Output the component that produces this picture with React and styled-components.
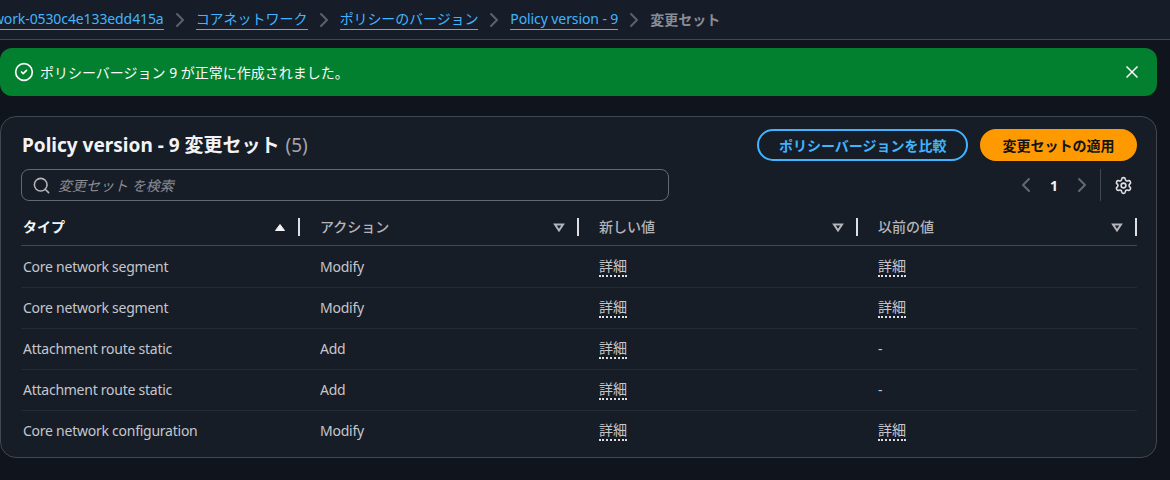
import React from 'react'
import styled, { createGlobalStyle } from 'styled-components'
import { Search, X, ChevronLeft, ChevronRight, Settings, CircleCheck } from 'lucide-react'

const GlobalStyle = createGlobalStyle`
  html, body {
    margin: 0;
    padding: 0;
    background: #0f141a;
  }
  body {
    font-family: "Noto Sans", "Noto Sans CJK JP", sans-serif;
    font-size: 14px;
    color: #c6c6cd;
  }
`

const Page = styled.div`
  width: 1170px;
  height: 480px;
  overflow: hidden;
  background: #10151d;
`

const TopBar = styled.nav`
  height: 39px;
  display: flex;
  align-items: center;
  background: #161d28;
  border-bottom: 1px solid #424650;
  overflow: hidden;
`

const Crumbs = styled.div`
  display: flex;
  align-items: center;
  margin-left: -61px;
  white-space: nowrap;
`

const CrumbLink = styled.a`
  color: #42b4ff;
  font-size: 14px;
  line-height: 20px;
  border-bottom: 1px solid #42b4ff;
  letter-spacing: ${p => (p.$tight ? '-0.1px' : '0')};
`

const CrumbSep = styled(ChevronRight)`
  width: 24px;
  height: 24px;
  color: #5f6169;
  margin: 0 4px;
  flex: none;
`

const CrumbCurrent = styled.span`
  color: #8c8c94;
  font-size: 14px;
  font-weight: 700;
  margin-bottom: 2px;
`

const Flash = styled.div`
  margin: 8px 13px 0 0;
  height: 48px;
  box-sizing: border-box;
  background: #037f30;
  border-radius: 12px;
  display: flex;
  align-items: center;
  padding: 0 15px 0 14px;
  color: #f9f9fa;
  font-size: 14px;
`

const FlashText = styled.span`
  flex: 1;
  margin-left: 6px;
`

const Card = styled.section`
  margin: 20px 13px 0 0;
  height: 342px;
  box-sizing: border-box;
  border: 1px solid #424650;
  border-radius: 16px;
  background: #161d26;
  padding: 12px 19px 0 20px;
`

const CardHead = styled.div`
  display: flex;
  align-items: center;
  justify-content: space-between;
  height: 32px;
`

const Title = styled.h2`
  margin: 0 0 0 1px;
  font-size: 19px;
  line-height: 32px;
  font-weight: 700;
  color: #f3f3f7;
`

const Count = styled.span`
  color: #a4a4ad;
  font-weight: 400;
  margin-left: 1px;
`

const Actions = styled.div`
  display: flex;
  gap: 12px;
`

const Button = styled.button`
  height: 32px;
  box-sizing: border-box;
  border-radius: 16px;
  font-family: inherit;
  font-size: 14px;
  font-weight: 700;
  padding: 0 ${p => (p.$primary ? '20.5px' : '19.5px')};
  background: ${p => (p.$primary ? '#ff9900' : 'transparent')};
  color: ${p => (p.$primary ? '#0f141a' : '#42b4ff')};
  border: 2px solid ${p => (p.$primary ? '#ff9900' : '#42b4ff')};
`

const Tools = styled.div`
  display: flex;
  align-items: center;
  justify-content: space-between;
  margin-top: 8px;
  height: 32px;
`

const SearchBox = styled.div`
  width: 648px;
  height: 32px;
  box-sizing: border-box;
  border: 1px solid #656871;
  border-radius: 8px;
  display: flex;
  align-items: center;
  padding: 0 10px;
  gap: 7px;
  color: #8c8c94;
  font-size: 14px;
  font-style: italic;
`

const Pager = styled.div`
  display: flex;
  align-items: center;
  color: #656871;
  padding-right: 4px;
`

const PageNum = styled.span`
  color: #f3f3f7;
  font-size: 14px;
  font-weight: 700;
  width: 32px;
  text-align: center;
`

const PrefDivider = styled.span`
  width: 1px;
  height: 32px;
  background: #424650;
  margin: 0 13px 0 6px;
`

const Table = styled.div`
  margin-top: 9px;
`

const Row = styled.div`
  display: grid;
  grid-template-columns: 279px 279px 279px 279px;
  box-sizing: border-box;
  height: ${p => (p.$head ? '36px' : p.$tall ? '42px' : '41px')};
  align-items: center;
  border-bottom: 1px solid ${p => (p.$head ? '#424650' : p.$last ? 'transparent' : '#232b37')};
`

const HeadCell = styled.div`
  display: flex;
  align-items: center;
  height: 35px;
  box-sizing: border-box;
  padding-left: ${p => (p.$first ? '2px' : '20px')};
  padding-right: 14px;
  color: ${p => (p.$active ? '#f3f3f7' : '#b4b4bb')};
  font-size: 14px;
  font-weight: ${p => (p.$active ? 700 : 500)};
  position: relative;
  justify-content: space-between;
  &::after {
    content: '';
    position: absolute;
    right: 0;
    top: 8px;
    width: 2px;
    height: 18px;
    background: #dedee3;
  }
`

const HeadLabel = styled.span`
  line-height: 18px;
  margin-bottom: 1px;
`

const Cell = styled.div`
  padding-left: ${p => (p.$first ? '2px' : '20px')};
  color: #c6c6cd;
  font-size: 14px;
  line-height: 20px;
  letter-spacing: -0.25px;
`

const Details = styled.span`
  display: inline-block;
  line-height: 18px;
  letter-spacing: 0;
  border-bottom: 2px dotted #dedee3;
  vertical-align: top;
`

const SortIcon = ({ up }) => (
  <svg width="12" height="12" viewBox="0 0 12 12">
    {up ? (
      <path d="M1.5 8.5 L6 2.5 L10.5 8.5 Z" fill="#f3f3f7" stroke="#f3f3f7" strokeWidth="1" />
    ) : (
      <path d="M2 2.5 H10 L6 8.5 Z" fill="none" stroke="#b4b4bb" strokeWidth="2" />
    )}
  </svg>
)

const rows = [
  ['Core network segment', 'Modify', '詳細', '詳細'],
  ['Core network segment', 'Modify', '詳細', '詳細'],
  ['Attachment route static', 'Add', '詳細', '-'],
  ['Attachment route static', 'Add', '詳細', '-'],
  ['Core network configuration', 'Modify', '詳細', '詳細'],
]

const heads = ['タイプ', 'アクション', '新しい値', '以前の値']

export default function App() {
  return (
    <Page>
      <GlobalStyle />
      <TopBar>
        <Crumbs>
          <CrumbLink $tight>core-network-0530c4e133edd415a</CrumbLink>
          <CrumbSep />
          <CrumbLink>コアネットワーク</CrumbLink>
          <CrumbSep />
          <CrumbLink $tight>ポリシーのバージョン</CrumbLink>
          <CrumbSep />
          <CrumbLink $tight>Policy version - 9</CrumbLink>
          <CrumbSep />
          <CrumbCurrent>変更セット</CrumbCurrent>
        </Crumbs>
      </TopBar>

      <Flash>
        <CircleCheck size={20} strokeWidth={2} />
        <FlashText>ポリシーバージョン 9 が正常に作成されました。</FlashText>
        <X size={20} strokeWidth={2} />
      </Flash>

      <Card>
        <CardHead>
          <Title>Policy version - 9 変更セット <Count>(5)</Count></Title>
          <Actions>
            <Button>ポリシーバージョンを比較</Button>
            <Button $primary>変更セットの適用</Button>
          </Actions>
        </CardHead>
        <Tools>
          <SearchBox>
            <Search size={19} color="#b4b4bb" strokeWidth={2} />
            変更セット を検索
          </SearchBox>
          <Pager>
            <ChevronLeft size={24} />
            <PageNum>1</PageNum>
            <ChevronRight size={24} />
            <PrefDivider />
            <Settings size={19} color="#dedee3" strokeWidth={2} />
          </Pager>
        </Tools>
        <Table>
          <Row $head>
            {heads.map((h, i) => (
              <HeadCell key={h} $first={i === 0} $active={i === 0}>
                <HeadLabel>{h}</HeadLabel>
                <SortIcon up={i === 0} />
              </HeadCell>
            ))}
          </Row>
          {rows.map((r, i) => (
            <Row key={i} $tall={i === 0} $last={i === rows.length - 1}>
              {r.map((c, j) => (
                <Cell key={j} $first={j === 0}>
                  {c === '詳細' ? <Details>{c}</Details> : c}
                </Cell>
              ))}
            </Row>
          ))}
        </Table>
      </Card>
    </Page>
  )
}
